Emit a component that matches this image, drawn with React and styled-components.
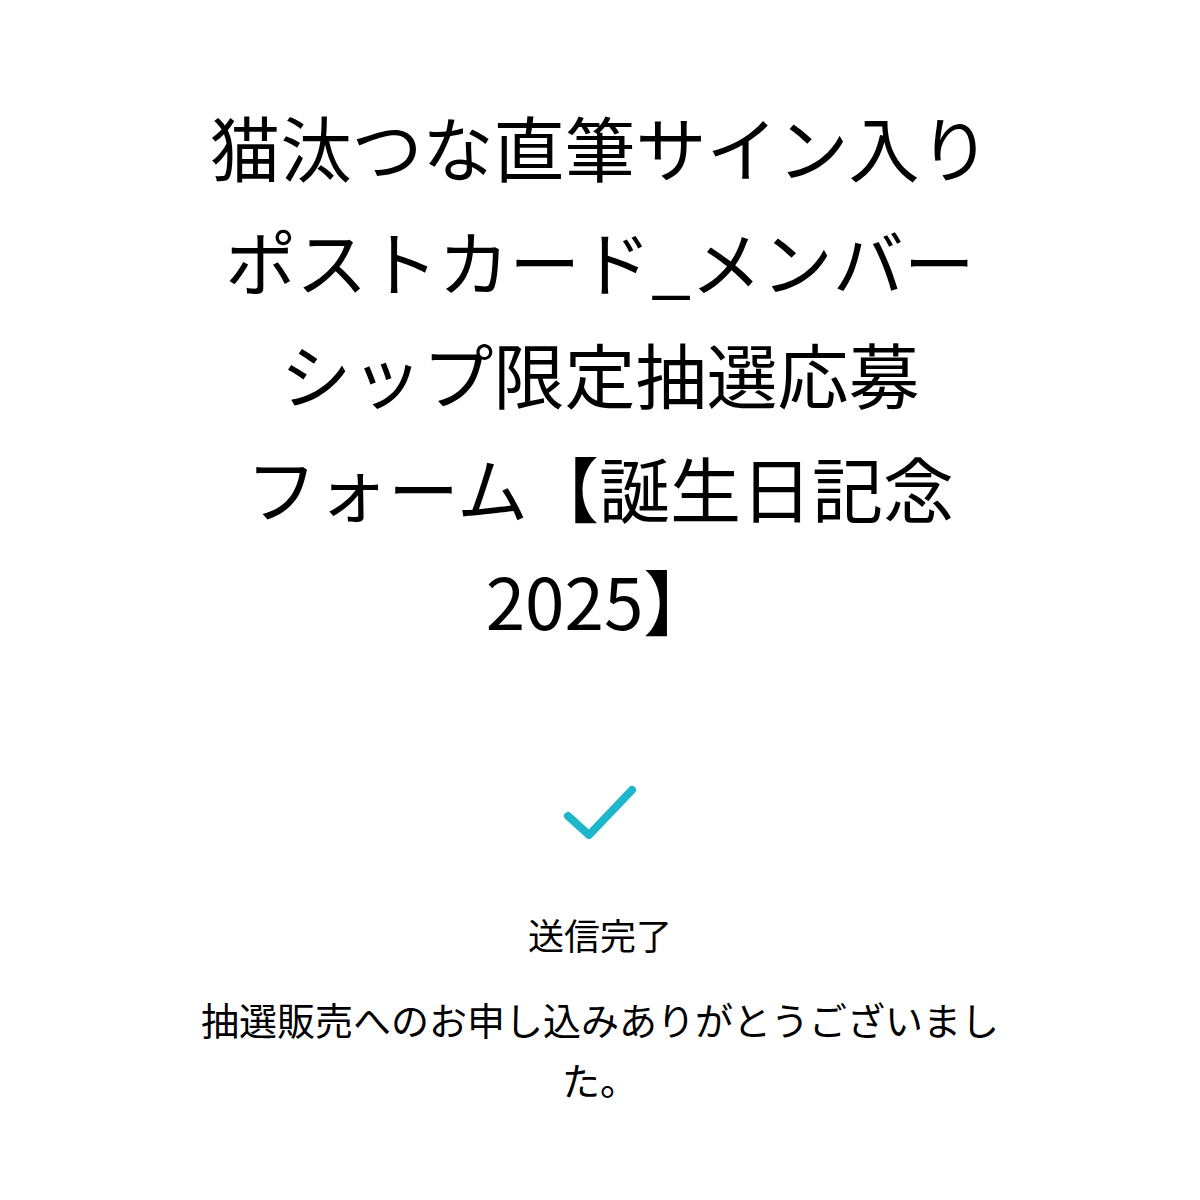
import styled, { createGlobalStyle } from "styled-components";

const GlobalStyle = createGlobalStyle`
    html, body {
        margin: 0;
        padding: 0;
        background: #ffffff;
    }
    body {
        font-family: "Noto Sans CJK JP", "Noto Sans", sans-serif;
        color: #000000;
    }
`;

const Page = styled.main`
    display: flex;
    flex-direction: column;
    align-items: center;
    padding-top: 89px;
    min-height: 1200px;
    box-sizing: border-box;
`;

const Title = styled.h1`
    width: 810px;
    margin: 0;
    font-size: 71px;
    font-weight: 400;
    line-height: 113.5px;
    text-align: center;
    letter-spacing: 0;
`;

const Complete = styled.section`
    width: 810px;
    display: flex;
    flex-direction: column;
    align-items: center;
    margin-top: 125px;
`;

const CheckIcon = styled.svg`
    width: 80px;
    height: 60px;
    display: block;
`;

const Status = styled.p`
    margin: 62px 0 0;
    font-size: 36px;
    line-height: 60px;
    text-align: center;
`;

const Message = styled.p`
    margin: 25px 0 0;
    font-size: 38px;
    line-height: 60px;
    text-align: center;
`;

const App = () => {
    return (
        <>
            <GlobalStyle />
            <Page>
                <Title>
                    猫汰つな直筆サイン入り<br />
                    ポストカード_メンバー<br />
                    シップ限定抽選応募<br />
                    フォーム【誕生日記念<br />
                    2025】
                </Title>
                <Complete>
                    <CheckIcon viewBox="0 0 80 60">
                        <polyline
                            points="8,34 29,53 72,8"
                            fill="none"
                            stroke="#1db6cb"
                            strokeWidth="8"
                            strokeLinecap="round"
                            strokeLinejoin="round"
                        />
                    </CheckIcon>
                    <Status>送信完了</Status>
                    <Message>抽選販売へのお申し込みありがとうございました。</Message>
                </Complete>
            </Page>
        </>
    );
};

export default App;
